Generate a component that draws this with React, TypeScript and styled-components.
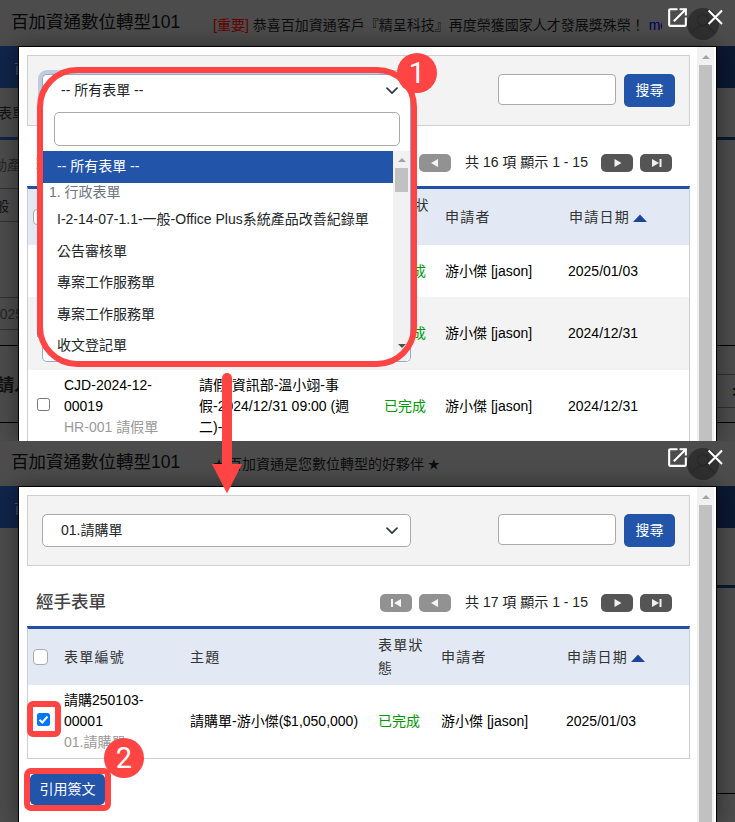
import React from 'react';
import styled, { createGlobalStyle } from 'styled-components';

const RED = '#ff4444';
const BLUE = '#2254a9';

const GlobalStyle = createGlobalStyle`
  * { box-sizing: border-box; }
  body {
    margin: 0;
    background: #4c4c4c;
    color: #000;
    font-family: "Liberation Sans", "Noto Sans CJK TC", sans-serif;
    font-size: 14px;
    line-height: 21px;
  }
`;

const Guide = styled.div`
  position: relative;
  width: 735px;
  height: 822px;
  overflow: hidden;
`;

/* One captured state of the application */
const Scene = styled.section<{ $height: number; $shift?: number }>`
  display: grid;
  grid-template-columns: 735px;
  grid-template-rows: ${(p) => p.$height + (p.$shift ?? 0)}px;
  height: ${(p) => p.$height}px;
  overflow: hidden;
  align-content: end;
  position: relative;
  > * { grid-area: 1 / 1; }
`;

/* Dimmed page behind the dialog */
const Backdrop = styled.div`
  display: flex;
  flex-direction: column;
  background: #4c4c4c;
  overflow: hidden;
`;
const TopBar = styled.header`
  display: flex;
  align-items: center;
  height: 46px;
  flex: none;
  padding: 0 16px 0 11px;
  white-space: nowrap;
`;
const SiteTitle = styled.div`
  width: 202px;
  font-size: 17.5px;
  padding-bottom: 1px;
  color: #080808;
`;
const News = styled.div`
  width: 449px;
  overflow: hidden;
  padding-top: 4px;
  color: #0c0c0c;
`;
const Important = styled.span`color: #650000;`;
const More = styled.span`color: #00005f; margin-left: 4px;`;
const Star = styled.span`display: inline-block; width: 11px; font-size: 12px;`;
const Avatar = styled.div`
  width: 32px;
  height: 32px;
  margin: 2px 0 0 25px;
  border-radius: 50%;
  background: #303030;
  svg { display: block; }
`;
const Columns = styled.div`
  display: flex;
  justify-content: space-between;
  flex: 1;
`;
const Strip = styled.div<{ $width: number }>`
  width: ${(p) => p.$width}px;
  overflow: hidden;
`;
const Band = styled.div<{ $h: number; $line?: string; $lw?: number; $bg?: string; $x?: number; $color?: string; $bold?: boolean }>`
  height: ${(p) => p.$h}px;
  display: flex;
  align-items: center;
  padding-top: 2px;
  white-space: nowrap;
  background: ${(p) => p.$bg ?? 'transparent'};
  border-bottom: ${(p) => (p.$line ? `${p.$lw ?? 1}px solid ${p.$line}` : 'none')};
  color: ${(p) => p.$color ?? '#111'};
  text-indent: ${(p) => p.$x ?? 0}px;
  font-weight: ${(p) => (p.$bold ? 700 : 400)};
  font-size: ${(p) => (p.$bold ? 17 : 14)}px;
`;

/* Dialog */
const Dialog = styled.div`
  margin: 46px 18px 0 18px;
  border: solid #000;
  border-width: 1px 1px 0 1px;
  background: #fff;
  box-shadow: 0 0 20px rgba(0, 0, 0, 0.45);
  display: flex;
  padding-right: 2px;
  overflow: hidden;
`;
const Body = styled.main`
  width: 678px;
  padding: 8px 7px 0 8px;
`;
const Scrollbar = styled.div<{ $gap?: number }>`
  width: 17px;
  background: #f1f1f1;
  display: flex;
  flex-direction: column;
  align-items: center;
  padding-top: ${(p) => p.$gap ?? 0}px;
`;
const ArrowUp = styled.div`
  height: 17px;
  flex: none;
  display: flex;
  align-items: center;
`;
const Thumb = styled.div<{ $height?: number }>`
  width: 13px;
  background: #c1c1c1;
  ${(p) => (p.$height ? `height: ${p.$height}px;` : 'flex: 1;')}
`;
const DialogTools = styled.div`
  position: absolute;
  top: 5px;
  right: 10px;
  display: flex;
  gap: 15px;
  svg { display: block; }
`;

const FilterPanel = styled.div`
  display: flex;
  align-items: flex-start;
  width: 663px;
  height: 71px;
  padding: 18px 14px;
  background: #f3f3f3;
  border: 1px solid #d0d0d0;
`;
const SelectBox = styled.div<{ $focus?: boolean }>`
  width: 369px;
  height: 33px;
  display: flex;
  align-items: center;
  justify-content: space-between;
  padding: 0 12px 0 18px;
  color: #212529;
  background: #fff;
  border: 1px solid ${(p) => (p.$focus ? '#91abd6' : '#aaa')};
  border-radius: 5px;
  ${(p) => (p.$focus ? `
    border-bottom-color: #fff;
    border-radius: 5px 5px 0 0;
    box-shadow: 0 0 0 4px #c0cbe0;
  ` : '')}
`;
const Keyword = styled.input`
  width: 118px;
  height: 31px;
  margin: 0 8px 0 87px;
  border: 1px solid #aaa;
  border-radius: 4px;
  background: #fff;
`;
const Primary = styled.button<{ $w: number; $h: number }>`
  width: ${(p) => p.$w}px;
  height: ${(p) => p.$h}px;
  padding: 0;
  border: 0;
  border-radius: 5px;
  background: ${BLUE};
  color: #fff;
  font: inherit;
`;

const PagerRow = styled.div`
  display: flex;
  align-items: center;
  justify-content: space-between;
  height: 60px;
  padding: 14px 18px 0 9px;
`;
const Heading = styled.h2`
  margin: 0;
  padding-bottom: 2px;
  font-size: 17.5px;
  font-weight: 500;
  color: #444;
`;
const Pager = styled.div`
  display: flex;
  align-items: center;
  gap: 7px;
  color: #222;
  svg { display: block; }
`;
const PageKey = styled.span<{ $off?: boolean }>`
  width: 32px;
  height: 18px;
  border-radius: 5px;
  background: ${(p) => (p.$off ? '#929292' : '#555')};
`;
const PageInfo = styled.span`
  width: 136px;
  padding: 0 0 2px 7px;
  white-space: nowrap;
`;

const Table = styled.div<{ $last?: boolean }>`
  width: 663px;
  border: 1px solid #ccced3;
  border-top: 3px solid #204fa3;
  border-bottom-width: ${(p) => (p.$last ? 1 : 0)}px;
`;
const Row = styled.div<{ $cols: string; $h: number; $alt?: boolean }>`
  display: grid;
  grid-template-columns: ${(p) => p.$cols};
  align-items: center;
  height: ${(p) => p.$h}px;
  white-space: nowrap;
  background: ${(p) => (p.$alt ? '#f3f3f3' : '#fff')};
`;
const HeadRow = styled(Row)`
  background: #e2e9f5;
  color: #333;
  letter-spacing: 1.25px;
  line-height: 23px;
`;
const Sorted = styled.div`
  display: flex;
  align-items: center;
  gap: 3px;
  padding-left: 1px;
  svg { margin-top: 1px; }
`;
const Muted = styled.span`color: #9a9a9a;`;
const Done = styled.span`color: #009900;`;
const Check = styled.span<{ $head?: boolean; $on?: boolean }>`
  width: ${(p) => (p.$head ? 15 : 13)}px;
  height: ${(p) => (p.$head ? 16 : 13)}px;
  margin-left: ${(p) => (p.$head ? 5 : 9)}px;
  margin-top: ${(p) => (p.$head ? 0 : -4)}px;
  border: ${(p) => (p.$on ? 0 : 1)}px solid ${(p) => (p.$head ? '#aaa' : '#767676')};
  border-radius: ${(p) => (p.$head ? 4 : 2.5)}px;
  background: ${(p) => (p.$on ? '#0075ff' : '#fff')};
  svg { display: block; }
`;
const Actions = styled.div`padding: 15px 0 0 3px;`;

/* Open list of form types */
const Dropdown = styled.div`
  position: absolute;
  left: 42px;
  top: 106px;
  width: 369px;
  height: 256px;
  background: #fff;
  border: 1px solid #91abd6;
  border-top: 0;
  border-radius: 0 0 5px 5px;
  overflow: hidden;
`;
const DropSearch = styled.input`
  display: block;
  width: 346px;
  height: 34px;
  margin: 6px 0 5px 11px;
  border: 1px solid #aaa;
  border-radius: 5px;
  background: #fff;
`;
const DropList = styled.div`
  display: grid;
  grid-template-columns: 350px 17px;
  height: 210px;
`;
const Options = styled.div`color: #212529; overflow: hidden;`;
const Option = styled.div<{ $selected?: boolean }>`
  height: 31.5px;
  padding: 6px 14px 4px;
  white-space: nowrap;
  ${(p) => (p.$selected ? `height: 32px; padding-top: 5px; background: ${BLUE}; color: #fff;` : '')}
`;
const Group = styled.div`
  height: 20px;
  padding-left: 6px;
  line-height: 18px;
  color: #6c757d;
`;
const FootArrow = styled.div`margin-top: auto; height: 18px; line-height: 0;`;

/* Annotations laid over the pages */
const Frame = styled.div<{ $x: number; $y: number; $w: number; $h: number; $r: number; $b: number }>`
  position: absolute;
  left: ${(p) => p.$x}px;
  top: ${(p) => p.$y}px;
  width: ${(p) => p.$w}px;
  height: ${(p) => p.$h}px;
  border: ${(p) => p.$b}px solid ${RED};
  border-radius: ${(p) => p.$r}px;
`;
const Step = styled.div<{ $x: number; $y: number }>`
  position: absolute;
  left: ${(p) => p.$x}px;
  top: ${(p) => p.$y}px;
  width: 40px;
  height: 40px;
  border-radius: 50%;
  background: ${RED};
  color: #fff;
  text-align: center;
  font: 29px/41px Roboto, sans-serif;
`;
const Pointer = styled.svg`
  position: absolute;
  left: 212px;
  top: 372px;
`;

const UpGlyph = () => (
  <ArrowUp><svg width="8" height="4" viewBox="0 0 8 4"><path d="M0 4 4 0 8 4Z" fill="#a3a3a3" /></svg></ArrowUp>
);
const Chevron = () => (
  <svg width="12" height="8" viewBox="0 0 12 8"><path d="M1 1.2 6 6.2 11 1.2" fill="none" stroke="#343a40" strokeWidth="1.7" strokeLinecap="round" strokeLinejoin="round" /></svg>
);
const SortGlyph = () => (
  <svg width="14" height="8" viewBox="0 0 14 8"><path d="M0 8 7 0.5 14 8Z" fill="#1d459c" /></svg>
);

const keyPaths = {
  first: 'M11 5h2v8h-2zM21 5v8l-7-4z',
  prev: 'M19 5v8l-7-4z',
  next: 'M13.5 5v8l7-4z',
  last: 'M12 5v8l7-4zM19.5 5h2v8h-2z',
};
const Key = ({ kind, off }: { kind: keyof typeof keyPaths; off?: boolean }) => (
  <PageKey $off={off}><svg width="32" height="18" viewBox="0 0 32 18"><path d={keyPaths[kind]} fill="#fff" fillOpacity={0.92} /></svg></PageKey>
);

const Page = ({ news, left, right }: { news: React.ReactNode; left: React.ReactNode; right: React.ReactNode }) => (
  <Backdrop>
    <TopBar>
      <SiteTitle>百加資通數位轉型101</SiteTitle>
      <News>{news}</News>
      <Avatar>
        <svg width="32" height="32" viewBox="0 0 32 32" fill="none" stroke="#292929" strokeWidth="1.5"><circle cx="16" cy="12" r="5.5" /><path d="M5 25c2-5 5-5 8-7h6c3 2 6 2 8 7" /></svg>
      </Avatar>
    </TopBar>
    <Columns><Strip $width={18}>{left}</Strip><Strip $width={18}>{right}</Strip></Columns>
  </Backdrop>
);

const Tools = () => (
  <DialogTools>
    <svg width="25" height="25" viewBox="0 0 24 24" fill="#fff"><path d="M19 19H5V5h7V3H5c-1.11 0-2 .9-2 2v14c0 1.1.89 2 2 2h14c1.1 0 2-.9 2-2v-7h-2v7zM14 3v2h3.59l-9.83 9.83 1.41 1.41L19 6.41V10h2V3h-7z" /></svg>
    <svg width="20" height="25" viewBox="0 0 20 25" fill="none" stroke="#fff" strokeWidth="2.1"><path d="M3.6 5.6 17 19M17 5.6 3.6 19" /></svg>
  </DialogTools>
);

const Content = ({ choice, focus, total, cols, children, actions }: {
  choice: string; focus?: boolean; total: number; cols: string; children: React.ReactNode; actions?: React.ReactNode;
}) => (
  <Dialog>
    <Body>
      <FilterPanel>
        <SelectBox $focus={focus}>{choice}<Chevron /></SelectBox>
        <Keyword />
        <Primary $w={51} $h={33}>搜尋</Primary>
      </FilterPanel>
      <PagerRow>
        <Heading>經手表單</Heading>
        <Pager>
          <Key kind="first" off /><Key kind="prev" off />
          <PageInfo>共 {total} 項 顯示 1 - 15</PageInfo>
          <Key kind="next" /><Key kind="last" />
        </Pager>
      </PagerRow>
      <Table $last={!!actions}>
        <HeadRow $cols={cols} $h={56}>
          <Check $head /><span>表單編號</span><span>主題</span><span>表單狀<br />態</span><span>申請者</span>
          <Sorted>申請日期<SortGlyph /></Sorted>
        </HeadRow>
        {children}
      </Table>
      {actions}
    </Body>
    <Scrollbar $gap={1}><UpGlyph /><Thumb /></Scrollbar>
  </Dialog>
);

const Record = ({ cols, h, alt, on, code, kind, subject, date }: {
  cols: string; h: number; alt?: boolean; on?: boolean; code?: string[]; kind?: string; subject?: string[]; date: string;
}) => (
  <Row $cols={cols} $h={h} $alt={alt}>
    <Check $on={on}>
      {on && <svg width="13" height="13" viewBox="0 0 13 13"><path d="m2.5 6.7 2.8 2.8 5.2-6" fill="none" stroke="#fff" strokeWidth="2" /></svg>}
    </Check>
    <span>{code?.map((c) => <React.Fragment key={c}>{c}<br /></React.Fragment>)}<Muted>{kind}</Muted></span>
    <span>{subject?.map((s) => <div key={s}>{s}</div>)}</span>
    <Done>已完成</Done>
    <span>游小傑 [jason]</span>
    <span>{date}</span>
  </Row>
);

const WIDE = '36px 135px 185px 61px 123px 1fr';
const NARROW = '36px 126px 188px 63px 125px 1fr';
const forms = ['I-2-14-07-1.1-一般-Office Plus系統產品改善紀錄單', '公告審核單', '專案工作服務單', '專案工作服務單', '收文登記單'];

export default function App() {
  return (
    <Guide>
      <GlobalStyle />
      <Scene $height={441}>
        <Page
          news={<><Important>[重要]</Important> 恭喜百加資通客戶『精呈科技』再度榮獲國家人才發展獎殊榮！<More>more</More></>}
          left={<>
            <Band $h={42} $bg="#10254a" $x={14} $color="#4a5870">首頁</Band>
            <Band $h={52} $line="#10254a" $lw={3} $x={-2}>表單</Band>
            <Band $h={49} $line="#303030" $x={-7} $color="#252525">動產</Band>
            <Band $h={33} $line="#303030" $x={-5}>般</Band>
            <Band $h={76} $line="#303030" />
            <Band $h={32} $line="#303030" $x={-8} $color="#242424">2025</Band>
            <Band $h={16} $line="#000" />
            <Band $h={77} $line="#000" $x={-3} $bold>請人</Band>
          </>}
          right={<>
            <Band $h={42} $bg="#0b1831" />
            <Band $h={52} $line="#0b1831" $lw={3} />
            <Band $h={206} $line="#000" />
            <Band $h={29} $line="#303030" />
            <Band $h={33} $line="#303030" $x={14} $color="#000">✕</Band>
            <Band $h={15} $line="#000" />
          </>}
        />
        <Content choice="-- 所有表單 --" focus total={16} cols={WIDE}>
          <Record cols={WIDE} h={52} date="2025/01/03" />
          <Record cols={WIDE} h={73} alt date="2024/12/31" />
          <Record cols={WIDE} h={73} code={['CJD-2024-12-', '00019']} kind="HR-001 請假單" subject={['請假-資訊部-溫小翊-事', '假-2024/12/31 09:00 (週', '二)-']} date="2024/12/31" />
        </Content>
        <Tools />
        <Dropdown>
          <DropSearch />
          <DropList>
            <Options>
              <Option $selected>-- 所有表單 --</Option>
              <Group>1. 行政表單</Group>
              {forms.map((f, i) => <Option key={i}>{f}</Option>)}
            </Options>
            <Scrollbar>
              <UpGlyph /><Thumb $height={24} />
              <FootArrow><svg width="8" height="4" viewBox="0 0 8 4"><path d="M0 0h8L4 4Z" fill="#505050" /></svg></FootArrow>
            </Scrollbar>
          </DropList>
        </Dropdown>
      </Scene>

      <Scene $height={381} $shift={1}>
        <Page
          news={<><Star>★</Star> 百加資通是您數位轉型的好夥伴 <Star>★</Star></>}
          left={<><Band $h={42} $bg="#10254a" $x={14} $color="#4a5870">首頁</Band></>}
          right={<>
            <Band $h={42} $bg="#0b1831" />
            <Band $h={60} $line="#0b1831" $lw={3} />
            <Band $h={206} $line="#000" />
          </>}
        />
        <Content
          choice="01.請購單" total={17} cols={NARROW}
          actions={<Actions><Primary $w={75} $h={31}>引用簽文</Primary></Actions>}
        >
          <Record cols={NARROW} h={73} on code={['請購250103-', '00001']} kind="01.請購單" subject={['請購單-游小傑($1,050,000)']} date="2025/01/03" />
        </Content>
        <Tools />
      </Scene>

      <Frame $x={37} $y={67} $w={380} $h={300} $r={40} $b={6} />
      <Step $x={397} $y={53}>1</Step>
      <Pointer width="30" height="123" viewBox="0 0 30 123">
        <path d="M15 6V100" stroke={RED} strokeWidth="10" strokeLinecap="round" />
        <path d="M0 92H30L15 121.5Z" fill={RED} />
      </Pointer>
      <Frame $x={27} $y={701} $w={34} $h={36} $r={6} $b={6} />
      <Frame $x={24} $y={768} $w={87} $h={43} $r={7} $b={6} />
      <Step $x={104} $y={738}>2</Step>
    </Guide>
  );
}
